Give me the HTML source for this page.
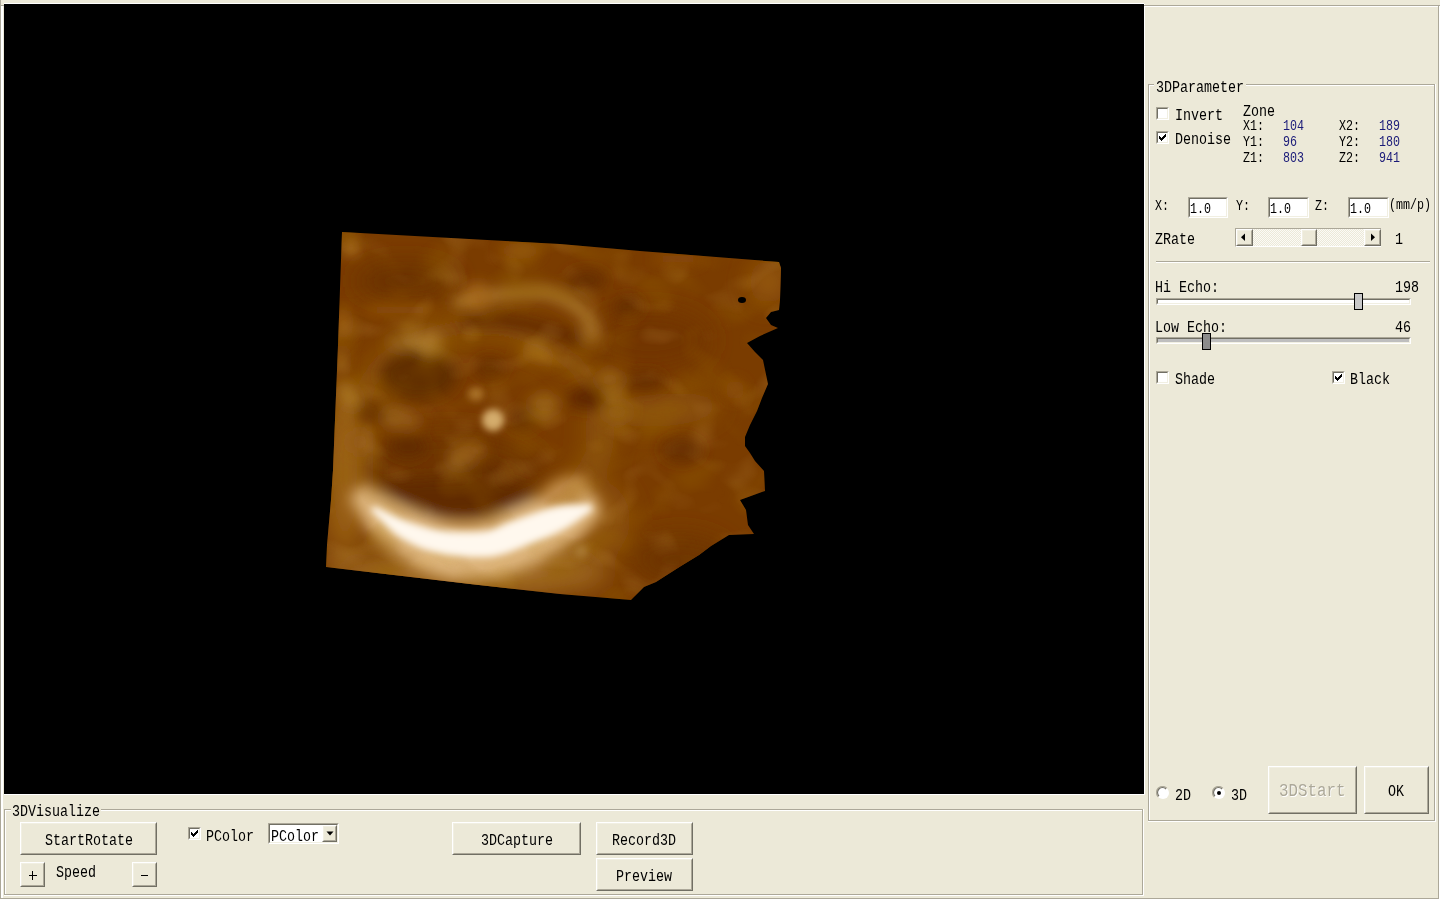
<!DOCTYPE html>
<html><head><meta charset="utf-8">
<style>
html,body{margin:0;padding:0;width:1440px;height:900px;overflow:hidden;background:#ECE9D8;}
body{position:relative;font-family:"Liberation Mono",monospace;color:#000;}
.a{position:absolute;}
.t{position:absolute;font-size:16px;line-height:16px;white-space:pre;transform:scaleX(0.8333);transform-origin:0 0;}
.s{font-size:14px;line-height:14px;}
.gl{position:absolute;border-top:1px solid #ACA899;border-left:1px solid #ACA899;border-bottom:1px solid #FFF;border-right:1px solid #FFF;}
.gi{position:absolute;border-top:1px solid #FFF;border-left:1px solid #FFF;border-bottom:1px solid #ACA899;border-right:1px solid #ACA899;}
.btn{position:absolute;box-sizing:border-box;background:#ECE9D8;border-top:1px solid #FFF;border-left:1px solid #FFF;border-right:1px solid #716F64;border-bottom:1px solid #716F64;}
.btn::after{content:"";position:absolute;left:0;top:0;right:0;bottom:0;border-right:1px solid #ACA899;border-bottom:1px solid #ACA899;border-top:1px solid #F1EFE2;border-left:1px solid #F1EFE2;}
.sunk{position:absolute;box-sizing:border-box;background:#FFF;border-top:1px solid #ACA899;border-left:1px solid #ACA899;border-right:1px solid #FFF;border-bottom:1px solid #FFF;}
.sunk::after{content:"";position:absolute;left:0;top:0;right:0;bottom:0;border-top:1px solid #716F64;border-left:1px solid #716F64;border-right:1px solid #F1EFE2;border-bottom:1px solid #F1EFE2;}
.cb{position:absolute;width:13px;height:13px;}
.blue{color:#1a1a78;}
.gray{color:#ACA899;}
</style></head><body>

<!-- outer frame lines -->
<div class="a" style="left:0;top:0;width:1px;height:900px;background:#ACA899"></div>
<div class="a" style="left:1px;top:6px;width:2px;height:892px;background:#FFF"></div>
<div class="a" style="left:0;top:5px;width:4px;height:1px;background:#ACA899"></div>
<div class="a" style="left:0;top:898px;width:1440px;height:1px;background:#ACA899"></div>
<div class="a" style="left:0;top:899px;width:1440px;height:1px;background:#FFF"></div>

<!-- 3D view -->
<div class="a" style="left:4px;top:3px;width:1140px;height:1px;background:#FFF"></div>
<div class="a" id="view" style="left:4px;top:4px;width:1140px;height:790px;background:#000;overflow:hidden">
<svg width="1140" height="790" viewBox="4 4 1140 790" style="position:absolute;left:0;top:0">
<defs>
<clipPath id="vc"><path d="M342,232 L560,244 L640,251 L779,262 L781,268 L780,300 L779,310 L771,312 L766,318 L771,325 L778,328 L760,336 L747,343 L755,352 L763,360 L768,384 L762,398 L757,411 L750,425 L745,437 L745,446 L750,453 L755,461 L764,471 L765,491 L740,500 L746,510 L748,525 L754,534 L729,535 L711,546 L699,555 L681,566 L670,573 L656,582 L644,587 L635,596 L631,600 L560,594 L470,584 L326,567 L327,545 L331,500 L333,470 L338,345 Z"/></clipPath>
<filter id="b1" filterUnits="userSpaceOnUse" x="250" y="150" width="650" height="550"><feGaussianBlur stdDeviation="12"/></filter>
<filter id="b2" filterUnits="userSpaceOnUse" x="250" y="150" width="650" height="550"><feGaussianBlur stdDeviation="7"/></filter>
<filter id="tx" filterUnits="userSpaceOnUse" x="300" y="220" width="500" height="400"><feTurbulence type="fractalNoise" baseFrequency="0.022 0.03" numOctaves="2" seed="7"/><feGaussianBlur stdDeviation="3"/><feColorMatrix type="matrix" values="0 0 0 0 0.3  0 0 0 0 0.12  0 0 0 0 0  2.2 0 0 0 -1.05"/></filter>
<filter id="tx2" filterUnits="userSpaceOnUse" x="300" y="220" width="500" height="400"><feTurbulence type="fractalNoise" baseFrequency="0.025 0.035" numOctaves="2" seed="21"/><feGaussianBlur stdDeviation="3"/><feColorMatrix type="matrix" values="0 0 0 0 0.72  0 0 0 0 0.45  0 0 0 0 0.1  2.0 0 0 0 -1.05"/></filter>
<filter id="b3" filterUnits="userSpaceOnUse" x="250" y="150" width="650" height="550"><feGaussianBlur stdDeviation="3.5"/></filter>
</defs>
<g clip-path="url(#vc)">
<rect x="300" y="220" width="500" height="400" fill="#7A3C00"/>
<g filter="url(#b1)">
<ellipse cx="478" cy="425" rx="122" ry="98" fill="none" stroke="#905810" stroke-width="18"/>
<ellipse cx="450" cy="475" rx="95" ry="45" fill="#6E3400"/>
<ellipse cx="405" cy="281" rx="50" ry="18" fill="#6A3000"/>
<ellipse cx="650" cy="340" rx="60" ry="30" fill="#723600"/>
<ellipse cx="660" cy="408" rx="50" ry="14" fill="#8A500A" transform="rotate(-3 660 408)"/>
<ellipse cx="345" cy="470" rx="20" ry="85" fill="#9C6418"/>
<ellipse cx="600" cy="430" rx="14" ry="42" fill="#8C520C"/>
<ellipse cx="665" cy="410" rx="55" ry="16" fill="#8E540C" transform="rotate(-5 665 410)"/>
<ellipse cx="470" cy="574" rx="140" ry="22" fill="#A06A22"/>
<ellipse cx="595" cy="520" rx="35" ry="40" fill="#8E5210"/>
<ellipse cx="768" cy="282" rx="18" ry="22" fill="#965A10"/>
<ellipse cx="680" cy="560" rx="50" ry="25" fill="#6E3400"/>
</g>
<g filter="url(#b2)">
<path d="M458,302 Q500,292 545,292 Q575,300 588,318 Q594,328 594,336" stroke="#AD7C2D" stroke-width="12" fill="none" stroke-linecap="round"/>
<path d="M468,322 Q520,316 578,340" stroke="#5E2800" stroke-width="12" fill="none" stroke-linecap="round"/>
<ellipse cx="419" cy="375" rx="39" ry="25" fill="#612D00"/>
<ellipse cx="416" cy="342" rx="30" ry="7" fill="#9D6C23"/>
<ellipse cx="348" cy="395" rx="7" ry="15" fill="#AD7A28" transform="rotate(-30 348 395)"/>
<ellipse cx="341" cy="360" rx="6" ry="14" fill="#9A6418"/>
<ellipse cx="396" cy="418" rx="12" ry="10" fill="#9F6C23"/>
<ellipse cx="371" cy="412" rx="14" ry="10" fill="#662D00"/>
<ellipse cx="408" cy="447" rx="20" ry="10" fill="#612A00"/>
<ellipse cx="360" cy="442" rx="12" ry="12" fill="#955C15"/>
<ellipse cx="461" cy="457" rx="13" ry="10" fill="#9F6C23"/>
<ellipse cx="351" cy="247" rx="8" ry="8" fill="#B87F28"/>
<ellipse cx="477" cy="297" rx="14" ry="14" fill="#A5691B"/>
<ellipse cx="343" cy="323" rx="6" ry="14" fill="#A56715"/>
<ellipse cx="400" cy="310" rx="40" ry="6" fill="#8F5108"/>
<ellipse cx="430" cy="343" rx="12" ry="12" fill="#AD7A2B"/>
<ellipse cx="520" cy="251" rx="20" ry="8" fill="#95590A"/>
<ellipse cx="587" cy="280" rx="20" ry="10" fill="#662D00"/>
<ellipse cx="627" cy="307" rx="15" ry="10" fill="#662D00"/>
<ellipse cx="538" cy="355" rx="20" ry="6" fill="#A56C15" transform="rotate(15 538 355)"/>
<ellipse cx="544" cy="405" rx="15" ry="12" fill="#9A6415"/>
<ellipse cx="610" cy="380" rx="14" ry="11" fill="#976112"/>
<ellipse cx="592" cy="335" rx="11" ry="9" fill="#A26C23"/>
<ellipse cx="587" cy="398" rx="20" ry="12" fill="#5E2800"/>
<ellipse cx="490" cy="368" rx="15" ry="10" fill="#662D00"/>
<ellipse cx="523" cy="420" rx="14" ry="12" fill="#662D00"/>
<ellipse cx="617" cy="412" rx="14" ry="12" fill="#976112"/>
<ellipse cx="735" cy="390" rx="10" ry="10" fill="#8C4E08"/>
<ellipse cx="645" cy="382" rx="20" ry="10" fill="#682F00"/>
<ellipse cx="682" cy="450" rx="20" ry="12" fill="#662D00"/>
<ellipse cx="678" cy="259" rx="25" ry="6" fill="#8C4E08"/>
<ellipse cx="450" cy="497" rx="85" ry="20" fill="#612A00"/>
<ellipse cx="469" cy="451" rx="16" ry="10" fill="#955C15"/>
<ellipse cx="407" cy="420" rx="14" ry="10" fill="#925912"/>
<ellipse cx="485" cy="472" rx="20" ry="8" fill="#662D00"/>
<path d="M349.1,497.2 L350.4,499.3 L351.6,501.4 L352.8,503.5 L354.0,505.7 L355.2,507.8 L356.4,510.0 L357.6,512.3 L358.8,514.5 L360.1,516.8 L361.4,519.1 L362.8,521.4 L364.3,523.8 L365.8,526.1 L367.4,528.4 L369.1,530.8 L371.0,533.1 L372.9,535.4 L375.0,537.7 L377.2,540.0 L379.6,542.1 L381.8,544.1 L384.1,546.1 L386.4,548.0 L388.8,549.9 L391.3,551.7 L393.9,553.6 L396.5,555.4 L399.2,557.1 L401.9,558.8 L404.6,560.5 L407.4,562.1 L410.3,563.7 L413.1,565.2 L416.0,566.6 L418.9,568.0 L421.9,569.4 L424.8,570.6 L427.8,571.8 L430.8,573.0 L433.9,574.0 L436.9,575.0 L440.0,575.9 L443.0,576.6 L446.1,577.3 L449.1,577.9 L452.1,578.4 L455.1,578.8 L458.1,579.1 L461.0,579.4 L463.9,579.6 L466.8,579.7 L469.7,579.8 L472.5,579.8 L475.3,579.8 L478.0,579.7 L480.7,579.6 L483.4,579.4 L486.0,579.2 L488.6,579.0 L491.2,578.7 L494.2,578.3 L497.2,577.8 L500.1,577.2 L502.9,576.6 L505.7,575.8 L508.3,575.1 L510.9,574.3 L513.4,573.5 L515.7,572.6 L518.0,571.7 L520.2,570.9 L522.3,570.0 L524.4,569.2 L526.3,568.3 L528.2,567.5 L530.0,566.7 L531.8,565.9 L533.5,565.1 L535.1,564.4 L536.7,563.6 L538.8,562.7 L540.9,561.7 L543.0,560.7 L545.1,559.7 L547.2,558.8 L549.2,557.7 L551.2,556.7 L553.2,555.7 L555.2,554.7 L557.1,553.6 L559.0,552.6 L560.9,551.5 L562.8,550.4 L564.6,549.3 L566.3,548.2 L568.0,547.1 L569.7,546.0 L571.3,544.8 L572.9,543.7 L574.4,542.5 L576.0,541.2 L577.5,539.9 L579.1,538.6 L580.5,537.2 L582.0,535.8 L583.5,534.3 L584.9,532.8 L586.3,531.3 L587.7,529.8 L589.1,528.3 L590.5,526.8 L591.8,525.2 L593.2,523.7 L594.6,522.1 L596.0,520.5 L597.3,519.0 L598.7,517.5 L600.1,515.9 L601.6,514.4 L603.0,512.9 L592.0,491.1 L589.9,491.2 L587.9,491.3 L585.8,491.3 L583.7,491.3 L581.7,491.4 L579.6,491.4 L577.5,491.4 L575.4,491.4 L573.3,491.4 L571.3,491.5 L569.2,491.5 L567.1,491.6 L565.0,491.7 L563.0,491.9 L560.9,492.1 L558.8,492.3 L556.7,492.6 L554.7,492.9 L552.6,493.3 L550.5,493.8 L548.4,494.3 L546.3,495.0 L544.2,495.6 L542.1,496.3 L540.1,497.0 L538.1,497.8 L536.1,498.6 L534.1,499.4 L532.2,500.2 L530.3,501.0 L528.4,501.9 L526.5,502.7 L524.7,503.5 L522.9,504.3 L521.1,505.1 L519.3,505.9 L517.6,506.6 L515.9,507.3 L514.2,508.0 L512.2,508.8 L510.1,509.7 L508.0,510.6 L506.0,511.5 L504.1,512.4 L502.2,513.3 L500.5,514.1 L498.8,514.9 L497.2,515.7 L495.7,516.4 L494.3,517.1 L492.9,517.7 L491.5,518.3 L490.3,518.9 L489.0,519.4 L487.9,519.8 L486.7,520.2 L485.6,520.6 L484.5,520.9 L483.4,521.2 L482.1,521.4 L480.3,521.7 L478.6,522.0 L476.9,522.2 L475.1,522.5 L473.4,522.7 L471.6,522.8 L469.9,522.9 L468.1,523.0 L466.3,523.1 L464.6,523.2 L462.8,523.2 L461.1,523.1 L459.3,523.1 L457.6,523.0 L455.8,522.9 L454.1,522.7 L452.4,522.6 L450.7,522.3 L449.0,522.1 L447.3,521.8 L445.5,521.4 L443.5,521.0 L441.5,520.5 L439.5,519.9 L437.3,519.2 L435.1,518.5 L432.9,517.7 L430.6,516.9 L428.3,516.0 L425.9,515.1 L423.6,514.1 L421.3,513.2 L418.9,512.2 L416.6,511.2 L414.3,510.2 L412.1,509.2 L409.8,508.2 L407.6,507.2 L405.5,506.3 L403.5,505.5 L401.7,504.7 L399.8,503.9 L397.9,503.0 L396.0,502.1 L394.1,501.1 L392.1,500.1 L390.1,499.0 L388.1,497.9 L386.0,496.8 L383.9,495.5 L381.8,494.3 L379.7,493.0 L377.5,491.7 L375.3,490.3 L373.1,489.0 L370.9,487.6 L368.6,486.2 L366.3,484.8 L364.0,483.4Z" fill="#DDB47A"/>
<ellipse cx="565" cy="492" rx="25" ry="14" fill="#C28D4B" transform="rotate(-20 565 492)"/>
</g>
<rect x="300" y="220" width="500" height="400" filter="url(#tx)" opacity="0.5"/>
<rect x="300" y="220" width="500" height="400" filter="url(#tx2)" opacity="0.3"/>
<g filter="url(#b3)">
<path d="M370.6,510.1 L372.0,511.4 L373.5,512.8 L374.9,514.3 L376.3,515.7 L377.7,517.2 L379.1,518.6 L380.5,520.1 L381.9,521.6 L383.4,523.0 L384.8,524.5 L386.3,526.0 L387.8,527.4 L389.3,528.9 L390.9,530.3 L392.4,531.7 L394.1,533.0 L395.7,534.4 L397.4,535.6 L399.2,536.9 L401.0,538.1 L402.7,539.1 L404.4,540.2 L406.2,541.2 L407.9,542.1 L409.7,543.1 L411.5,544.0 L413.2,544.8 L415.1,545.7 L416.9,546.5 L418.8,547.2 L420.7,548.0 L422.6,548.7 L424.5,549.4 L426.5,550.0 L428.5,550.6 L430.5,551.2 L432.6,551.8 L434.7,552.3 L436.9,552.8 L439.1,553.3 L441.3,553.8 L443.6,554.2 L446.0,554.7 L448.4,555.0 L450.8,555.4 L453.3,555.7 L455.9,556.0 L458.4,556.3 L461.0,556.6 L463.6,556.8 L466.2,556.9 L468.8,557.1 L471.3,557.2 L473.9,557.3 L476.4,557.3 L478.9,557.3 L481.3,557.3 L483.8,557.2 L486.1,557.1 L488.5,556.9 L490.8,556.7 L493.1,556.4 L495.3,556.0 L497.5,555.6 L499.6,555.1 L501.6,554.6 L503.5,554.1 L505.4,553.5 L507.2,552.9 L508.9,552.3 L510.6,551.7 L512.3,551.1 L513.9,550.4 L515.5,549.8 L517.0,549.2 L518.5,548.6 L520.1,548.0 L521.6,547.4 L523.1,546.8 L524.7,546.2 L526.6,545.5 L528.5,544.7 L530.5,544.0 L532.5,543.2 L534.6,542.4 L536.6,541.6 L538.7,540.8 L540.8,539.9 L542.9,539.1 L544.9,538.2 L547.0,537.4 L549.0,536.5 L551.1,535.6 L553.1,534.7 L555.0,533.8 L556.9,532.9 L558.8,532.0 L560.6,531.1 L562.4,530.2 L564.1,529.3 L565.7,528.4 L567.3,527.5 L568.9,526.5 L570.4,525.6 L571.9,524.6 L573.4,523.7 L574.8,522.7 L576.3,521.7 L577.7,520.8 L579.0,519.8 L580.4,518.8 L581.8,517.8 L583.2,516.8 L584.5,515.8 L585.9,514.8 L587.3,513.8 L588.7,512.8 L590.1,511.8 L591.5,510.8 L593.0,509.8 L590.2,504.2 L588.4,504.3 L586.7,504.4 L585.0,504.5 L583.3,504.5 L581.6,504.5 L579.9,504.6 L578.2,504.6 L576.5,504.7 L574.8,504.7 L573.1,504.8 L571.4,504.8 L569.6,504.9 L567.9,505.1 L566.1,505.2 L564.3,505.4 L562.5,505.6 L560.6,505.9 L558.8,506.2 L556.9,506.5 L554.9,506.9 L553.0,507.4 L550.9,507.9 L548.9,508.4 L546.8,509.0 L544.7,509.7 L542.6,510.3 L540.5,511.0 L538.4,511.7 L536.3,512.4 L534.1,513.1 L532.0,513.9 L529.9,514.6 L527.9,515.4 L525.8,516.1 L523.8,516.8 L521.8,517.5 L519.9,518.2 L518.0,518.9 L516.2,519.5 L514.3,520.2 L512.3,520.9 L510.4,521.6 L508.6,522.4 L506.9,523.1 L505.3,523.8 L503.8,524.5 L502.3,525.2 L500.8,525.9 L499.5,526.5 L498.2,527.1 L496.9,527.7 L495.6,528.2 L494.3,528.7 L493.1,529.2 L491.8,529.6 L490.5,530.0 L489.2,530.4 L487.8,530.7 L486.3,531.0 L484.7,531.2 L482.9,531.4 L481.0,531.6 L479.1,531.8 L477.0,531.9 L474.9,532.0 L472.7,532.1 L470.5,532.1 L468.2,532.1 L465.9,532.1 L463.6,532.1 L461.3,532.0 L459.0,531.9 L456.7,531.8 L454.5,531.7 L452.2,531.5 L450.1,531.4 L447.9,531.2 L445.9,531.0 L443.9,530.8 L442.0,530.5 L440.1,530.3 L438.3,530.0 L436.6,529.7 L434.8,529.4 L433.1,529.1 L431.4,528.7 L429.7,528.3 L428.1,527.9 L426.4,527.5 L424.8,527.0 L423.2,526.6 L421.5,526.1 L419.9,525.6 L418.3,525.1 L416.6,524.5 L414.9,524.0 L413.3,523.4 L411.6,522.8 L409.8,522.2 L408.2,521.7 L406.5,521.1 L404.9,520.4 L403.2,519.8 L401.5,519.1 L399.8,518.4 L398.0,517.6 L396.3,516.8 L394.5,516.0 L392.7,515.2 L390.9,514.3 L389.1,513.4 L387.3,512.6 L385.4,511.7 L383.6,510.8 L381.7,509.9 L379.9,509.0 L378.0,508.1 L376.2,507.2 L374.3,506.3Z" fill="#FFF8EE"/>
<ellipse cx="493" cy="420" rx="11" ry="11" fill="#D4AC6C"/>
<ellipse cx="476" cy="394" rx="8" ry="7" fill="#A87028"/>
<ellipse cx="581" cy="551" rx="7" ry="7" fill="#A87830"/>
</g>
</g>
<ellipse cx="742" cy="300" rx="4" ry="3" fill="#000"/>
<ellipse cx="774" cy="317" rx="4" ry="3" fill="#000"/>
</svg>
</div>
<div class="a" style="left:1144px;top:4px;width:1px;height:790px;background:#FFF"></div>
<div class="a" style="left:4px;top:794px;width:1141px;height:1px;background:#FFF"></div>

<!-- right panel outer etched -->
<div class="a" style="left:1144px;top:5px;width:296px;height:1px;background:#ACA899"></div>
<div class="a" style="left:1145px;top:6px;width:295px;height:1px;background:#FFF"></div>
<div class="a" style="left:1438px;top:5px;width:1px;height:893px;background:#ACA899"></div>
<div class="a" style="left:1439px;top:6px;width:1px;height:893px;background:#FFF"></div>

<!-- 3DVisualize group -->
<div class="a" style="left:4px;top:809px;width:1138px;height:1px;background:#ACA899"></div>
<div class="a" style="left:5px;top:810px;width:1137px;height:1px;background:#FFF"></div>
<div class="a" style="left:4px;top:809px;width:1px;height:86px;background:#ACA899"></div>
<div class="a" style="left:5px;top:810px;width:1px;height:84px;background:#FFF"></div>
<div class="a" style="left:4px;top:894px;width:1139px;height:1px;background:#ACA899"></div>
<div class="a" style="left:4px;top:895px;width:1140px;height:1px;background:#FFF"></div>
<div class="a" style="left:1142px;top:809px;width:1px;height:86px;background:#ACA899"></div>
<div class="a" style="left:1143px;top:809px;width:1px;height:87px;background:#FFF"></div>
<div class="a" style="left:11px;top:800px;width:90px;height:14px;background:#ECE9D8"></div>
<div class="t" style="left:12px;top:804px">3DVisualize</div>

<div class="btn" style="left:20px;top:822px;width:137px;height:33px"></div>
<div class="t" style="left:45px;top:833px">StartRotate</div>
<div class="btn" style="left:20px;top:862px;width:25px;height:25px"></div>
<div class="a" style="left:29px;top:875px;width:8px;height:1px;background:#000"></div><div class="a" style="left:32px;top:871px;width:1px;height:9px;background:#000"></div>
<div class="t" style="left:56px;top:865px">Speed</div>
<div class="btn" style="left:132px;top:862px;width:25px;height:25px"></div>
<div class="a" style="left:141px;top:875px;width:7px;height:1px;background:#000"></div>

<div class="sunk cb" style="left:188px;top:827px"></div>
<div class="t" style="left:206px;top:829px">PColor</div>
<div class="sunk" style="left:268px;top:823px;width:71px;height:21px"></div>
<div class="t" style="left:271px;top:829px">PColor</div>
<div class="btn" style="left:322px;top:825px;width:15px;height:17px"></div>

<div class="btn" style="left:452px;top:822px;width:129px;height:33px"></div>
<div class="t" style="left:481px;top:833px">3DCapture</div>
<div class="btn" style="left:596px;top:822px;width:97px;height:33px"></div>
<div class="t" style="left:612px;top:833px">Record3D</div>
<div class="btn" style="left:596px;top:858px;width:97px;height:33px"></div>
<div class="t" style="left:616px;top:869px">Preview</div>

<!-- 3DParameter group -->
<div class="a" style="left:1148px;top:84px;width:287px;height:1px;background:#ACA899"></div>
<div class="a" style="left:1149px;top:85px;width:285px;height:1px;background:#FFF"></div>
<div class="a" style="left:1148px;top:84px;width:1px;height:737px;background:#ACA899"></div>
<div class="a" style="left:1149px;top:85px;width:1px;height:735px;background:#FFF"></div>
<div class="a" style="left:1148px;top:820px;width:287px;height:1px;background:#ACA899"></div>
<div class="a" style="left:1148px;top:821px;width:288px;height:1px;background:#FFF"></div>
<div class="a" style="left:1434px;top:84px;width:1px;height:737px;background:#ACA899"></div>
<div class="a" style="left:1435px;top:84px;width:1px;height:738px;background:#FFF"></div>
<div class="a" style="left:1154px;top:76px;width:92px;height:14px;background:#ECE9D8"></div>
<div class="t" style="left:1156px;top:80px">3DParameter</div>

<div class="sunk cb" style="left:1156px;top:107px"></div>
<div class="t" style="left:1175px;top:108px">Invert</div>
<div class="sunk cb" style="left:1156px;top:131px"></div>
<div class="t" style="left:1175px;top:132px">Denoise</div>
<div class="t" style="left:1243px;top:104px">Zone</div>
<div class="t s" style="left:1243px;top:119px">X1:</div>
<div class="t s" style="left:1243px;top:135px">Y1:</div>
<div class="t s" style="left:1243px;top:151px">Z1:</div>
<div class="t s blue" style="left:1283px;top:119px">104</div>
<div class="t s blue" style="left:1283px;top:135px">96</div>
<div class="t s blue" style="left:1283px;top:151px">803</div>
<div class="t s" style="left:1339px;top:119px">X2:</div>
<div class="t s" style="left:1339px;top:135px">Y2:</div>
<div class="t s" style="left:1339px;top:151px">Z2:</div>
<div class="t s blue" style="left:1379px;top:119px">189</div>
<div class="t s blue" style="left:1379px;top:135px">180</div>
<div class="t s blue" style="left:1379px;top:151px">941</div>

<div class="t s" style="left:1155px;top:199px">X:</div>
<div class="sunk" style="left:1188px;top:197px;width:40px;height:21px"></div>
<div class="t s" style="left:1190px;top:202px">1.0</div>
<div class="t s" style="left:1236px;top:199px">Y:</div>
<div class="sunk" style="left:1268px;top:197px;width:41px;height:21px"></div>
<div class="t s" style="left:1270px;top:202px">1.0</div>
<div class="t s" style="left:1315px;top:199px">Z:</div>
<div class="sunk" style="left:1348px;top:197px;width:41px;height:21px"></div>
<div class="t s" style="left:1350px;top:202px">1.0</div>
<div class="t s" style="left:1389px;top:198px">(mm/p)</div>

<div class="t" style="left:1155px;top:232px">ZRate</div>
<div class="a" style="left:1235px;top:228px;width:146px;height:19px;box-sizing:border-box;border-top:1px solid #ACA899;border-left:1px solid #ACA899;border-bottom:1px solid #FFF;background:repeating-conic-gradient(#FBFAF6 0 25%,#ECE9D8 0 50%) 0 0/2px 2px"></div>
<div class="btn" style="left:1236px;top:229px;width:17px;height:17px"></div>
<div class="btn" style="left:1301px;top:229px;width:16px;height:17px"></div>
<div class="btn" style="left:1364px;top:229px;width:17px;height:17px"></div>
<div class="t" style="left:1395px;top:232px">1</div>

<div class="a" style="left:1156px;top:261px;width:274px;height:1px;background:#ACA899"></div>
<div class="a" style="left:1156px;top:262px;width:274px;height:1px;background:#FFF"></div>

<div class="t" style="left:1155px;top:280px">Hi Echo:</div>
<div class="t" style="left:1395px;top:280px">198</div>
<div class="sunk" style="left:1156px;top:298px;width:255px;height:7px"></div>
<div class="a" style="left:1354px;top:293px;width:9px;height:17px;box-sizing:border-box;border:1px solid #000;background:#C8C8C8"></div>

<div class="t" style="left:1155px;top:320px">Low Echo:</div>
<div class="t" style="left:1395px;top:320px">46</div>
<div class="sunk" style="left:1156px;top:337px;width:255px;height:7px;background:#BEBEBE"></div>
<div class="a" style="left:1202px;top:333px;width:9px;height:17px;box-sizing:border-box;border:1px solid #000;background:#8C8C8C"></div>

<div class="sunk cb" style="left:1156px;top:371px"></div>
<div class="t" style="left:1175px;top:372px">Shade</div>
<div class="sunk cb" style="left:1332px;top:371px"></div>
<div class="t" style="left:1350px;top:372px">Black</div>

<div class="t" style="left:1175px;top:788px">2D</div>
<div class="t" style="left:1231px;top:788px">3D</div>
<div class="btn" style="left:1268px;top:766px;width:89px;height:48px"></div>
<div class="t gray" style="left:1279px;top:782px;font-size:19px;line-height:19px;text-shadow:1px 1px 0 #fff">3DStart</div>
<div class="btn" style="left:1364px;top:766px;width:65px;height:48px"></div>
<div class="t" style="left:1388px;top:784px">OK</div>

<svg class="a" style="left:1156px;top:131px" width="13" height="13" shape-rendering="crispEdges"><rect x="3" y="5" width="1" height="3"/><rect x="4" y="6" width="1" height="3"/><rect x="5" y="7" width="1" height="3"/><rect x="6" y="6" width="1" height="3"/><rect x="7" y="5" width="1" height="3"/><rect x="8" y="4" width="1" height="3"/><rect x="9" y="3" width="1" height="3"/></svg>
<svg class="a" style="left:188px;top:827px" width="13" height="13" shape-rendering="crispEdges"><rect x="3" y="5" width="1" height="3"/><rect x="4" y="6" width="1" height="3"/><rect x="5" y="7" width="1" height="3"/><rect x="6" y="6" width="1" height="3"/><rect x="7" y="5" width="1" height="3"/><rect x="8" y="4" width="1" height="3"/><rect x="9" y="3" width="1" height="3"/></svg>
<svg class="a" style="left:1332px;top:371px" width="13" height="13" shape-rendering="crispEdges"><rect x="3" y="5" width="1" height="3"/><rect x="4" y="6" width="1" height="3"/><rect x="5" y="7" width="1" height="3"/><rect x="6" y="6" width="1" height="3"/><rect x="7" y="5" width="1" height="3"/><rect x="8" y="4" width="1" height="3"/><rect x="9" y="3" width="1" height="3"/></svg>
<svg class="a" style="left:326px;top:831px" width="9" height="6"><path d="M0.5,0.5 H7.5 L4,4.5 Z" fill="#000"/></svg>
<svg class="a" style="left:1240px;top:233px" width="6" height="9"><path d="M5,0.5 V8 L1,4.25 Z" fill="#000"/></svg>
<svg class="a" style="left:1370px;top:233px" width="6" height="9"><path d="M1,0.5 V8 L5,4.25 Z" fill="#000"/></svg>
<svg class="a" style="left:1156px;top:786px" width="14" height="14"><circle cx="7" cy="7" r="6" fill="#FFF"/><path d="M2.2,10.8 A5.6,5.6 0 0 1 10.8,2.2" stroke="#ACA899" stroke-width="1.2" fill="none"/><path d="M3,10 A4.6,4.6 0 0 1 10,3" stroke="#716F64" stroke-width="1.1" fill="none"/></svg>
<svg class="a" style="left:1212px;top:786px" width="14" height="14"><circle cx="7" cy="7" r="6" fill="#FFF"/><path d="M2.2,10.8 A5.6,5.6 0 0 1 10.8,2.2" stroke="#ACA899" stroke-width="1.2" fill="none"/><path d="M3,10 A4.6,4.6 0 0 1 10,3" stroke="#716F64" stroke-width="1.1" fill="none"/><circle cx="7" cy="7" r="2" fill="#000"/></svg>
</body></html>
